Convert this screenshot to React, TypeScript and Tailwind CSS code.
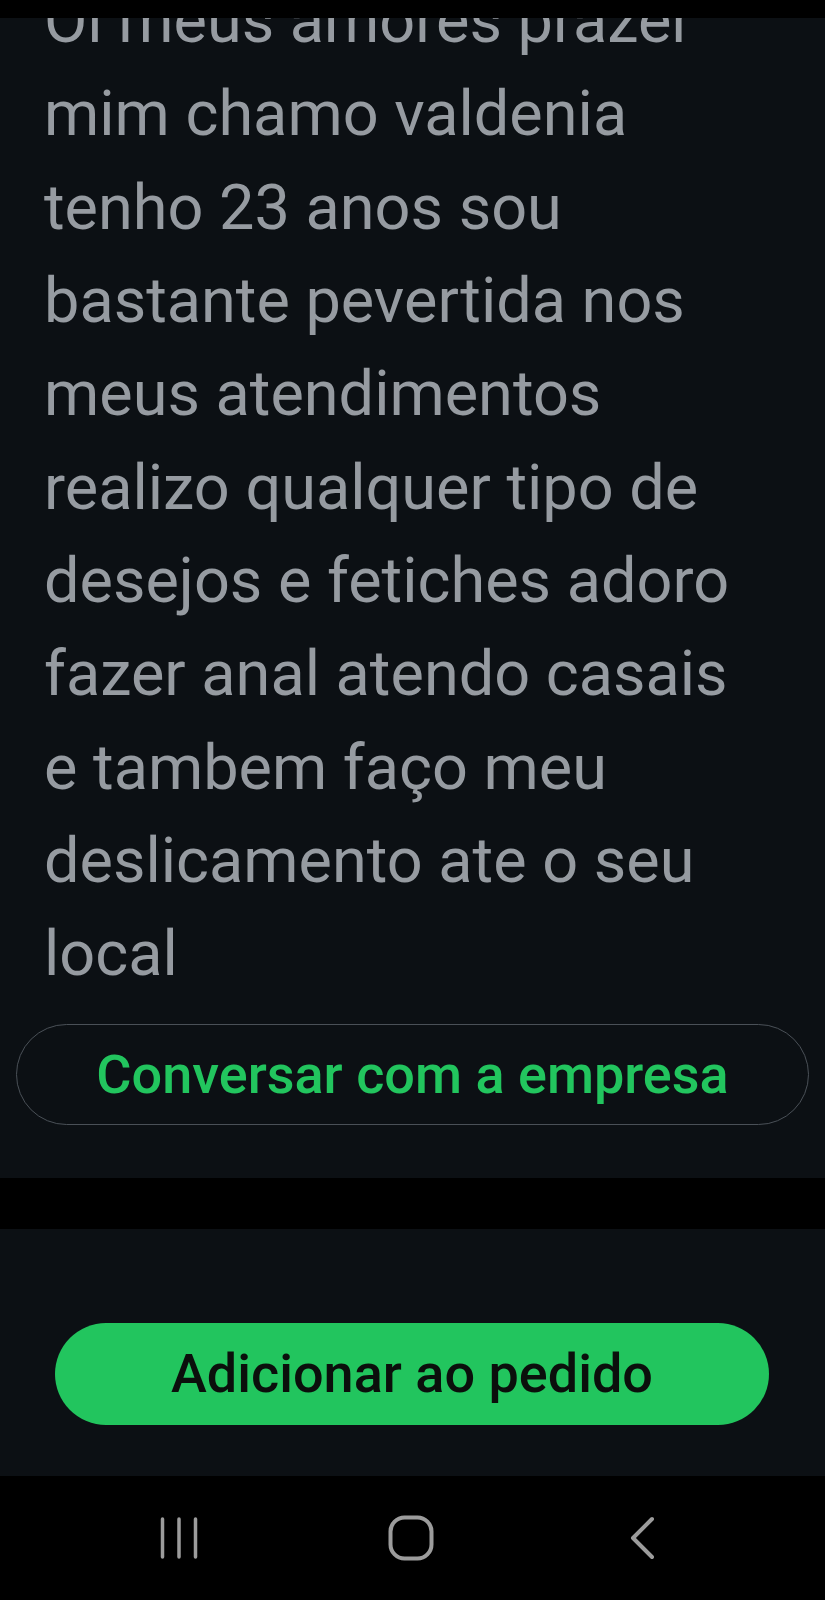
import React from 'react';

const lines = [
  'Oi meus amores prazer',
  'mim chamo valdenia',
  'tenho 23 anos sou',
  'bastante pevertida nos',
  'meus atendimentos',
  'realizo qualquer tipo de',
  'desejos e fetiches adoro',
  'fazer anal atendo casais',
  'e tambem faço meu',
  'deslicamento ate o seu',
  'local',
];

export default function App() {
  return (
    <div className="w-[825px] h-[1600px] bg-black flex flex-col overflow-hidden font-['Roboto',sans-serif]">
      {/* status bar */}
      <div className="h-[18px] bg-black shrink-0 relative z-10" />

      {/* description */}
      <section className="bg-[#0c1014] overflow-hidden shrink-0">
        <p className="-mt-[44px] pl-[44px] pr-4 text-[63px] leading-[93.33px] text-[#969ba1] whitespace-nowrap">
          {lines.map((line, i) => (
            <span key={i} className="block">
              {line}
            </span>
          ))}
        </p>
        <div className="px-4 pt-[23px] pb-[53px]">
          <button className="w-[793px] h-[101px] rounded-full border-[1.5px] border-[#4a5057] flex items-center justify-center text-[54px] font-medium text-[#22c55e]">
            Conversar com a empresa
          </button>
        </div>
      </section>

      <div className="h-[51px] bg-black shrink-0" />

      {/* bottom action */}
      <section className="bg-[#0c1014] h-[247px] shrink-0 pt-[94px] px-[55px]">
        <button className="w-[714px] h-[102px] rounded-full bg-[#22c55e] flex items-center justify-center text-[54px] font-medium text-[#0b0f0c]">
          Adicionar ao pedido
        </button>
      </section>

      {/* navigation bar */}
      <nav className="flex-1 bg-black flex items-center pl-[160px]">
        <svg width="38" height="42" viewBox="0 0 38 42" fill="none">
          <g stroke="#9c9c9c" strokeWidth="3.5" strokeLinecap="round">
            <line x1="2.5" y1="2" x2="2.5" y2="40" />
            <line x1="19" y1="2" x2="19" y2="40" />
            <line x1="35.5" y1="2" x2="35.5" y2="40" />
          </g>
        </svg>
        <svg className="ml-[190px]" width="46" height="46" viewBox="0 0 46 46" fill="none">
          <rect x="2.5" y="2.5" width="41" height="41" rx="14" stroke="#9c9c9c" strokeWidth="4" />
        </svg>
        <svg className="ml-[195px]" width="26" height="44" viewBox="0 0 26 44" fill="none">
          <path d="M23 3 L4 22 L23 41" stroke="#9c9c9c" strokeWidth="4" strokeLinecap="round" strokeLinejoin="round" />
        </svg>
      </nav>
    </div>
  );
}
